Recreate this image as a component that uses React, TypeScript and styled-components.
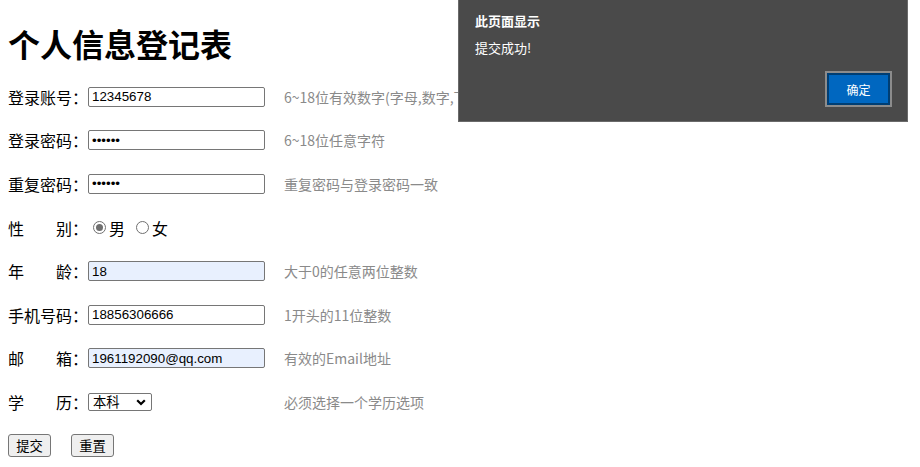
import React from 'react';
import styled, { createGlobalStyle } from 'styled-components';

const GlobalStyle = createGlobalStyle`
  html, body {
    margin: 0;
    padding: 0;
    background: #ffffff;
  }
  body {
    padding: 8px;
    font-family: "Noto Sans CJK SC", "Liberation Sans", sans-serif;
    color: #000;
  }
`;

const Page = styled.div`
  position: relative;
`;

const Title = styled.h1`
  margin: 19px 0 16px;
  font-size: 32px;
  line-height: 32px;
  font-weight: bold;
  font-family: "Noto Sans CJK SC", sans-serif;
`;

const Form = styled.form`
  display: flex;
  flex-direction: column;
`;

const Row = styled.div`
  display: flex;
  align-items: center;
  height: 43.6px;
`;

const Label = styled.label`
  width: 80px;
  display: flex;
  justify-content: space-between;
  font-size: 16px;
  line-height: 20px;
  flex-shrink: 0;
`;

const Field = styled.div`
  width: 196px;
  display: flex;
  align-items: center;
  flex-shrink: 0;
`;

const TextInput = styled.input<{ $filled?: boolean }>`
  box-sizing: border-box;
  width: 177px;
  height: 20px;
  padding: 1px 3px;
  border: 1px solid #767676;
  border-radius: 2px;
  background: ${(p) => (p.$filled ? '#e8f0fe' : '#ffffff')};
  font-family: "Liberation Sans", Arial, sans-serif;
  font-size: 13.33px;
  color: #000;
  outline: none;
`;

const Hint = styled.span`
  font-size: 14px;
  color: #8a8a8a;
  white-space: nowrap;
`;

const RadioGroup = styled.div`
  display: flex;
  align-items: center;
  font-size: 16px;
`;

const Radio = styled.input.attrs({ type: 'radio' })<{ $gap?: number }>`
  appearance: none;
  box-sizing: border-box;
  width: 13px;
  height: 13px;
  margin: 0 3px 0 ${(p) => p.$gap ?? 5}px;
  border: 1px solid #707070;
  border-radius: 50%;
  background: #fff;
  position: relative;
  &:checked::after {
    content: '';
    position: absolute;
    left: 2px;
    top: 2px;
    width: 7px;
    height: 7px;
    border-radius: 50%;
    background: #6f6f6f;
  }
`;

const SelectWrap = styled.div`
  position: relative;
  width: 64px;
  height: 18px;
`;

const Select = styled.select`
  appearance: none;
  display: block;
  box-sizing: border-box;
  width: 64px;
  height: 18px;
  margin: 0;
  padding: 0 0 0 4px;
  border: 1px solid #767676;
  border-radius: 2px;
  background: #fff;
  font-family: "Noto Sans CJK SC", sans-serif;
  font-size: 13.33px;
  line-height: 16px;
  color: #000;
  outline: none;
`;

const Chevron = styled.svg`
  position: absolute;
  right: 6px;
  top: 6px;
  pointer-events: none;
`;

const Buttons = styled.div`
  display: flex;
  gap: 20px;
  margin-top: 10px;
`;

const Button = styled.button`
  box-sizing: border-box;
  width: 43px;
  height: 23px;
  padding: 0;
  border: 1px solid #767676;
  border-radius: 3px;
  background: #efefef;
  font-family: "Noto Sans CJK SC", sans-serif;
  font-size: 13.33px;
  color: #000;
`;

const Dialog = styled.div`
  position: fixed;
  left: 458px;
  top: 0;
  box-sizing: border-box;
  width: 450px;
  height: 122px;
  padding: 12px 17px 0 16px;
  background: #4a4a4a;
  border: 1px solid #6a6a6a;
  border-top: none;
  color: #ffffff;
  display: flex;
  flex-direction: column;
`;

const DialogTitle = styled.div`
  font-size: 13px;
  font-weight: bold;
  line-height: 18px;
`;

const DialogMessage = styled.div`
  font-size: 13px;
  line-height: 18px;
  margin-top: 9px;
`;

const DialogFooter = styled.div`
  display: flex;
  justify-content: flex-end;
  margin-top: 16px;
`;

const OkButton = styled.button`
  box-sizing: border-box;
  width: 63px;
  height: 32px;
  padding: 0;
  border: 2px solid #003e73;
  background: #0067c0;
  color: #ffffff;
  font-family: "Noto Sans CJK SC", sans-serif;
  font-size: 12px;
  box-shadow: 0 0 0 2px #8c8c8c;
`;

type FieldRow = {
  label: string[];
  value: string;
  type?: string;
  filled?: boolean;
  hint: string;
};

const rows: FieldRow[] = [
  { label: ['登录账号：'], value: '12345678', hint: '6~18位有效数字(字母,数字,下划线)' },
  { label: ['登录密码：'], value: '123456', type: 'password', hint: '6~18位任意字符' },
  { label: ['重复密码：'], value: '123456', type: 'password', hint: '重复密码与登录密码一致' },
];

const rows2: FieldRow[] = [
  { label: ['年', '龄：'], value: '18', filled: true, hint: '大于0的任意两位整数' },
  { label: ['手机号码：'], value: '18856306666', hint: '1开头的11位整数' },
  { label: ['邮', '箱：'], value: '1961192090@qq.com', filled: true, hint: '有效的Email地址' },
];

const renderRow = (r: FieldRow) => (
  <Row key={r.label.join('')}>
    <Label>
      {r.label.map((t) => (
        <span key={t}>{t}</span>
      ))}
    </Label>
    <Field>
      <TextInput type={r.type || 'text'} defaultValue={r.value} $filled={r.filled} />
    </Field>
    <Hint>{r.hint}</Hint>
  </Row>
);

const App = () => {
  return (
    <Page>
      <GlobalStyle />
      <Title>个人信息登记表</Title>
      <Form onSubmit={(e) => e.preventDefault()}>
        {rows.map(renderRow)}
        <Row>
          <Label>
            <span>性</span>
            <span>别：</span>
          </Label>
          <RadioGroup>
            <Radio name="sex" defaultChecked />
            <span>男</span>
            <Radio name="sex" $gap={11} />
            <span>女</span>
          </RadioGroup>
        </Row>
        {rows2.map(renderRow)}
        <Row>
          <Label>
            <span>学</span>
            <span>历：</span>
          </Label>
          <Field>
            <SelectWrap>
              <Select defaultValue="本科">
                <option>专科</option>
                <option>本科</option>
                <option>硕士</option>
                <option>博士</option>
              </Select>
              <Chevron width="10" height="7" viewBox="0 0 10 7">
                <path d="M1.2 1.2 L5 5 L8.8 1.2" fill="none" stroke="#000" strokeWidth="2.2" />
              </Chevron>
            </SelectWrap>
          </Field>
          <Hint>必须选择一个学历选项</Hint>
        </Row>
        <Buttons>
          <Button type="submit">提交</Button>
          <Button type="reset">重置</Button>
        </Buttons>
      </Form>
      <Dialog>
        <DialogTitle>此页面显示</DialogTitle>
        <DialogMessage>提交成功!</DialogMessage>
        <DialogFooter>
          <OkButton>确定</OkButton>
        </DialogFooter>
      </Dialog>
    </Page>
  );
};

export default App;
